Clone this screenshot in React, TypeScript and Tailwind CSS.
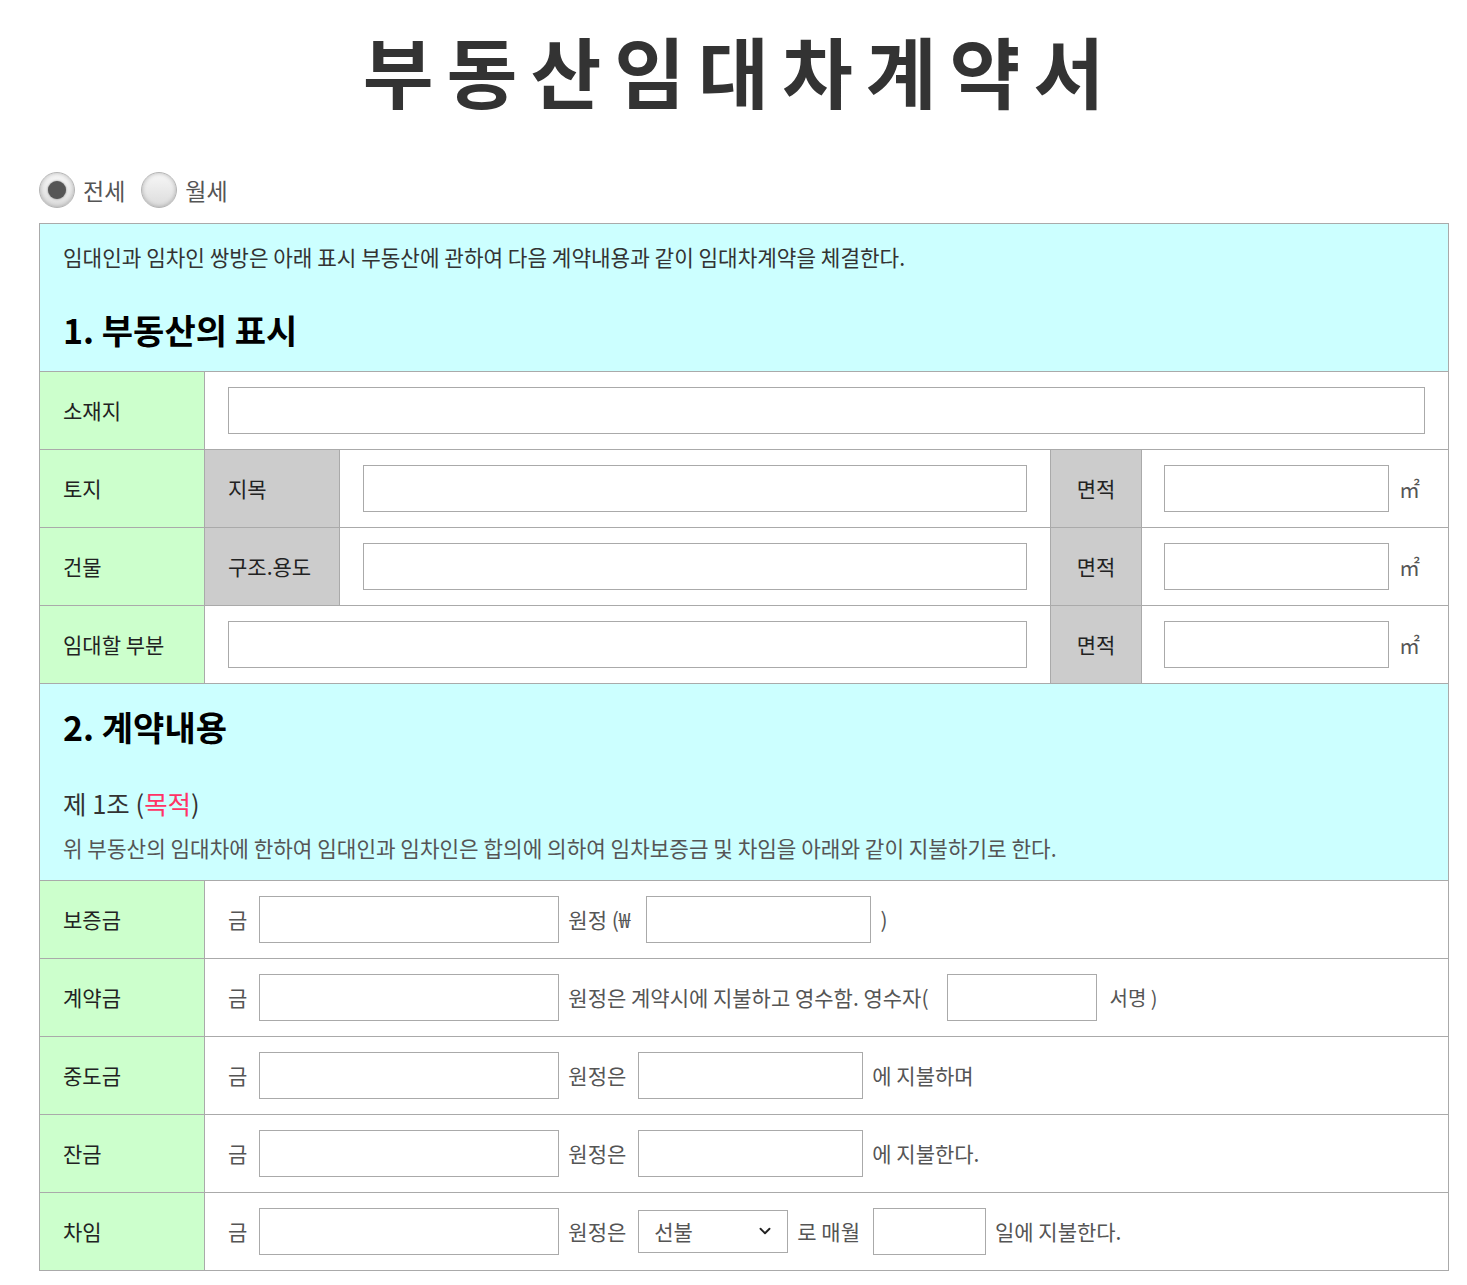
import React, { useState } from 'react';
import { ChevronDown } from 'lucide-react';

const font = { fontFamily: '"Noto Sans CJK KR", "Noto Sans", sans-serif' };

const Radio: React.FC<{ checked: boolean; label: string; onClick: () => void }> = ({ checked, label, onClick }) => (
    <label onClick={onClick} className="flex items-center gap-[8px] cursor-pointer">
        <span className="w-[36px] h-[36px] rounded-full border border-[#b5b5b5] bg-gradient-to-b from-[#f7f7f7] to-[#dcdcdc] shadow-[inset_0_0_4px_rgba(0,0,0,0.25)] flex items-center justify-center">
            {checked && <span className="w-[18px] h-[18px] rounded-full bg-[#555] shadow-[0_0_2px_rgba(0,0,0,0.5)]"></span>}
        </span>
        <span className="text-[23px] text-[#555]">{label}</span>
    </label>
);

const Box: React.FC<{ w: string }> = ({ w }) => (
    <input type="text" className={`${w} h-[47px] border border-[#aaa] bg-white outline-none px-2 text-[18px]`} />
);

const Label: React.FC<{ children: React.ReactNode }> = ({ children }) => (
    <div className="w-[165px] shrink-0 bg-[#ccffcc] border-r border-[#aaa] flex items-center pl-[23px] text-[21px] text-[#222]">
        {children}
    </div>
);

const Gray: React.FC<{ w: string; center?: boolean; children: React.ReactNode }> = ({ w, center, children }) => (
    <div className={`${w} shrink-0 bg-[#cccccc] border-r border-[#aaa] flex items-center text-[21px] text-[#222] ${center ? 'justify-center' : 'pl-[23px]'}`}>
        {children}
    </div>
);

const Row: React.FC<{ children: React.ReactNode }> = ({ children }) => (
    <div className="flex h-[78px] border-t border-[#aaa]">{children}</div>
);

const Area: React.FC = () => (
    <>
        <Gray w="w-[91px]" center>면적</Gray>
        <div className="flex-1 flex items-center pl-[22px] gap-[10px]">
            <Box w="w-[225px]" />
            <span className="text-[21px] text-[#555]">㎡</span>
        </div>
    </>
);

export default function App() {
    const [type, setType] = useState<'jeonse' | 'wolse'>('jeonse');

    return (
        <div className="min-h-screen bg-white pb-[20px]" style={font}>
            <h1 className="text-center text-[77px] font-bold text-[#333] tracking-[13px] leading-none pt-[31px] pl-[13px]">
                부동산임대차계약서
            </h1>

            <div className="ml-[39px] w-[1410px] mt-[64px]">
                <div className="flex items-center gap-[16px] h-[36px]">
                    <Radio checked={type === 'jeonse'} label="전세" onClick={() => setType('jeonse')} />
                    <Radio checked={type === 'wolse'} label="월세" onClick={() => setType('wolse')} />
                </div>

                <div className="mt-[15px] border border-[#aaa]">
                    {/* 1. 부동산의 표시 */}
                    <div className="bg-[#ccffff] px-[23px] pt-[18px] pb-[17px]">
                        <p className="text-[21.3px] leading-[30px] text-[#333]">
                            임대인과 임차인 쌍방은 아래 표시 부동산에 관하여 다음 계약내용과 같이 임대차계약을 체결한다.
                        </p>
                        <h2 className="mt-[34px] text-[34px] leading-[48px] font-bold text-black">1. 부동산의 표시</h2>
                    </div>

                    <Row>
                        <Label>소재지</Label>
                        <div className="flex-1 flex items-center px-[23px]">
                            <Box w="w-full" />
                        </div>
                    </Row>
                    <Row>
                        <Label>토지</Label>
                        <Gray w="w-[135px]">지목</Gray>
                        <div className="w-[711px] border-r border-[#aaa] flex items-center px-[23px]">
                            <Box w="w-full" />
                        </div>
                        <Area />
                    </Row>
                    <Row>
                        <Label>건물</Label>
                        <Gray w="w-[135px]">구조.용도</Gray>
                        <div className="w-[711px] border-r border-[#aaa] flex items-center px-[23px]">
                            <Box w="w-full" />
                        </div>
                        <Area />
                    </Row>
                    <Row>
                        <Label>임대할 부분</Label>
                        <div className="w-[846px] border-r border-[#aaa] flex items-center px-[23px]">
                            <Box w="w-full" />
                        </div>
                        <Area />
                    </Row>

                    {/* 2. 계약내용 */}
                    <div className="bg-[#ccffff] border-t border-[#aaa] px-[23px] pt-[19px] pb-[17px]">
                        <h2 className="text-[34px] leading-[48px] font-bold text-black">2. 계약내용</h2>
                        <p className="mt-[34px] text-[25.5px] leading-[36px] text-[#333]">
                            제 1조 (<span className="text-[#ff3366]">목적</span>)
                        </p>
                        <p className="mt-[12px] text-[21.3px] leading-[30px] text-[#555]">
                            위 부동산의 임대차에 한하여 임대인과 임차인은 합의에 의하여 임차보증금 및 차임을 아래와 같이 지불하기로 한다.
                        </p>
                    </div>

                    <Row>
                        <Label>보증금</Label>
                        <div className="flex-1 flex items-center pl-[23px] text-[21px] text-[#555]">
                            <span className="mr-[12px]">금</span>
                            <Box w="w-[300px]" />
                            <span className="ml-[9px] mr-[16px]">원정 (₩</span>
                            <Box w="w-[225px]" />
                            <span className="ml-[9px]">)</span>
                        </div>
                    </Row>
                    <Row>
                        <Label>계약금</Label>
                        <div className="flex-1 flex items-center pl-[23px] text-[21px] text-[#555]">
                            <span className="mr-[12px]">금</span>
                            <Box w="w-[300px]" />
                            <span className="ml-[9px] mr-[18px]">원정은 계약시에 지불하고 영수함. 영수자(</span>
                            <Box w="w-[150px]" />
                            <span className="ml-[13px] text-[20px]">서명 )</span>
                        </div>
                    </Row>
                    <Row>
                        <Label>중도금</Label>
                        <div className="flex-1 flex items-center pl-[23px] text-[21px] text-[#555]">
                            <span className="mr-[12px]">금</span>
                            <Box w="w-[300px]" />
                            <span className="ml-[9px] mr-[12px]">원정은</span>
                            <Box w="w-[225px]" />
                            <span className="ml-[9px]">에 지불하며</span>
                        </div>
                    </Row>
                    <Row>
                        <Label>잔금</Label>
                        <div className="flex-1 flex items-center pl-[23px] text-[21px] text-[#555]">
                            <span className="mr-[12px]">금</span>
                            <Box w="w-[300px]" />
                            <span className="ml-[9px] mr-[12px]">원정은</span>
                            <Box w="w-[225px]" />
                            <span className="ml-[9px]">에 지불한다.</span>
                        </div>
                    </Row>
                    <Row>
                        <Label>차임</Label>
                        <div className="flex-1 flex items-center pl-[23px] text-[21px] text-[#555]">
                            <span className="mr-[12px]">금</span>
                            <Box w="w-[300px]" />
                            <span className="ml-[9px] mr-[12px]">원정은</span>
                            <div className="relative w-[150px] h-[43px]">
                                <select className="appearance-none w-full h-full border border-[#aaa] bg-white pl-[15px] text-[21px] text-[#555] outline-none">
                                    <option>선불</option>
                                    <option>후불</option>
                                </select>
                                <ChevronDown size={18} strokeWidth={2.5} className="absolute right-[14px] top-[12px] text-[#222] pointer-events-none" />
                            </div>
                            <span className="ml-[9px] mr-[13px]">로 매월</span>
                            <Box w="w-[113px]" />
                            <span className="ml-[9px]">일에 지불한다.</span>
                        </div>
                    </Row>
                </div>
            </div>
        </div>
    );
}
